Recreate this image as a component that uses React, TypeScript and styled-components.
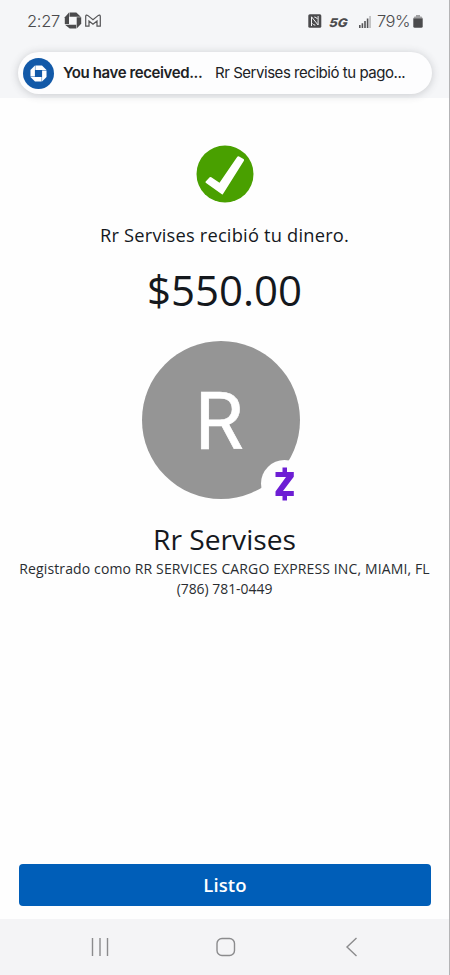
import React from "react";
import styled, { createGlobalStyle } from "styled-components";

const GlobalStyle = createGlobalStyle`
  * { box-sizing: border-box; }
  body { margin: 0; background: #fff; }
`;

const Screen = styled.div`
  width: 450px;
  height: 975px;
  display: flex;
  flex-direction: column;
  background: #fefefe;
  border-right: 1px solid #b4b4b6;
  overflow: hidden;
  color: #14181d;
  font-family: "Open Sans", "Noto Sans", sans-serif;
`;

const Header = styled.header`
  height: 98px;
  flex: none;
  background: #f5f6f8;
  padding-right: 17px;
  padding-left: 18px;
`;

const StatusBar = styled.div`
  height: 52px;
  display: flex;
  justify-content: space-between;
  align-items: flex-start;
  padding: 12px 9px 0 9px;
  color: #4b4b4d;
`;

const StatusGroup = styled.div`
  display: flex;
  align-items: center;
  height: 18px;
`;

const StatusText = styled.span<{ $spacing: number }>`
  font: 350 16.5px/18px Inter, Roboto, sans-serif;
  letter-spacing: ${(p) => p.$spacing}px;
  white-space: nowrap;
`;

const NotificationIcons = styled.svg`
  margin-left: 4px;
`;

const BatteryIcon = styled.svg`
  margin-left: 3px;
`;

const Network = styled.span`
  font: italic 800 12px/18px Inter, Roboto, sans-serif;
  transform: scaleX(1.1) skewX(-6deg);
  margin: 4px 12px 0 8px;
`;

const SignalIcon = styled.svg`
  margin: 1px 6px 0 0;
`;

const Banner = styled.div`
  height: 42px;
  border-radius: 21px;
  background: #fdfdfe;
  box-shadow: 0 1px 8px rgba(60, 64, 70, 0.24);
  display: flex;
  align-items: center;
  padding-left: 5px;
  white-space: nowrap;
`;

const AppBadge = styled.div`
  width: 31px;
  height: 31px;
  border-radius: 50%;
  background: #1259a8;
  display: grid;
  place-items: center;
  margin-right: 9px;
`;

const BannerText = styled.span<{ $weight: number; $width: number; $spacing: number }>`
  font: ${(p) => p.$weight} 15px/20px Inter, Roboto, sans-serif;
  letter-spacing: ${(p) => p.$spacing}px;
  width: ${(p) => p.$width}px;
  flex: none;
  color: #202124;
`;

const Content = styled.main`
  flex: 1;
  display: flex;
  flex-direction: column;
  align-items: center;
  padding-top: 47px;
`;

const Line = styled.div<{ $size: number; $height: number; $top?: number; $spacing?: number; $color?: string }>`
  font-size: ${(p) => p.$size}px;
  line-height: ${(p) => p.$height}px;
  margin-top: ${(p) => p.$top ?? 0}px;
  letter-spacing: ${(p) => p.$spacing ?? 0}px;
  color: ${(p) => p.$color ?? "#14181d"};
  white-space: nowrap;
`;

const Avatar = styled.div`
  position: relative;
  width: 158px;
  height: 158px;
  margin: 22px 7px 0 0;
  padding-right: 4px;
  border-radius: 50%;
  background: #959595;
  color: #fff;
  font: 400 79px/162px Roboto, sans-serif;
  -webkit-text-stroke: 0.6px #fff;
  text-align: center;
`;

const PaymentBadge = styled.div`
  position: absolute;
  left: 119px;
  top: 119px;
  width: 47px;
  height: 47px;
  border-radius: 50%;
  background: #fefefe;
  display: grid;
  place-items: center;
`;

const DoneButton = styled.button`
  height: 42px;
  margin: 0 18px 13px 19px;
  flex: none;
  border: 0;
  border-radius: 4px;
  background: #005eb8;
  color: #fff;
  font: 600 18.5px/42px "Open Sans", sans-serif;
  letter-spacing: 0.1px;
  padding: 0;
`;

const NavBar = styled.nav`
  height: 56px;
  flex: none;
  background: #f4f4f6;
  display: flex;
  justify-content: space-between;
  align-items: center;
  padding: 0 88px 0 90px;
`;

const NavIcon = styled.svg`
  width: 20px;
  height: 20px;
  fill: none;
  stroke: #8b8b8d;
  stroke-width: 1.4;
`;

const ChaseMark = () => (
  <svg width="17" height="17" viewBox="0 0 18 18" fill="#fff">
    <path d="M5.700.5h7l4.800 4.700H5.700z" />
    <path d="M17.500 5.700v7l-4.700 4.800V5.700z" />
    <path d="M12.300 17.500h-7L.5 12.800h11.800z" />
    <path d="M.5 12.300v-7L5.200.5v11.800z" />
  </svg>
);

export default function App() {
  return (
    <>
      <GlobalStyle />
      <Screen>
        <Header>
          <StatusBar>
            <StatusGroup>
              <StatusText $spacing={-0.3}>2:27</StatusText>
              <NotificationIcons width="40" height="18" viewBox="0 0 40 18">
                <g fill="#4b4b4d">
                  <path d="M5.500.5h6.800l4.500 4.200H5.500z" />
                  <path d="M17.200 5.300v6.500l-4.500 4.700V5.300z" />
                  <path d="M12.200 16.500H5.700L1 12.700h11.200z" />
                  <path d="M.8 12V5.300L5 .6V12z" />
                </g>
                <path d="M21.700 14.200V4.300q.3-1.900 2-.9l5.300 4.300 5.300-4.300q1.700-1 2 .9v9.900h-3.300V9l-4 3.300-4-3.300v5.200z" fill="none" stroke="#555557" strokeWidth="1.200" />
              </NotificationIcons>
            </StatusGroup>
            <StatusGroup>
              <svg width="14" height="14" viewBox="0 0 14 14">
                <rect x=".3" y=".3" width="13" height="13.400" rx="1.500" fill="#4b4b4d" />
                <path d="M3.500 12V2.800l6.600 8.200V2M6.300 3q2.500.2 3 2M4.500 9.500q.7 1.500 2.800 1.700" fill="none" stroke="#f5f6f8" strokeWidth="1" />
              </svg>
              <Network>5G</Network>
              <SignalIcon width="12" height="12" viewBox="0 0 12 12" fill="#555557">
                <path d="M0 9h1.600v3H0zM2.600 7.300h1.600V12H2.600zM5.200 5h1.600v7H5.200zM7.800 2.500h1.600V12H7.800z" />
                <path d="M10.300 0h1.500v12h-1.500z" opacity=".4" />
              </SignalIcon>
              <StatusText $spacing={-0.5}>79%</StatusText>
              <BatteryIcon width="10" height="13" viewBox="0 0 10 13">
                <path d="M3 0h4v1.500h1.500L9.500 3v1H.5V3l1-1.500H3z" fill="#a0a0a2" />
                <path d="M.3 3.500h9.400v7.700q0 1.500-1.500 1.500H1.800Q.3 12.700.3 11.200z" fill="#4b4b4d" />
              </BatteryIcon>
            </StatusGroup>
          </StatusBar>
          <Banner>
            <AppBadge><ChaseMark /></AppBadge>
            <BannerText $weight={600} $width={152} $spacing={-0.39}>You have received...</BannerText>
            <BannerText $weight={400} $width={200} $spacing={-0.46}>Rr Servises recibió tu pago...</BannerText>
          </Banner>
        </Header>
        <Content>
          <svg width="58" height="58" viewBox="0 0 58 58">
            <circle cx="29" cy="29" r="28.500" fill="#49a000" />
            <path d="M9.700 36.600l4-4.300q.8-.6 1.600 0l8.200 5.400L41.300 11.700q.8-.9 1.800-.3l4.400 2.600q1 .7.4 1.700L27 48.900q-.6.900-1.500.2L9.700 37.700q-.5-.5 0-1.100z" fill="#fff" />
          </svg>
          <Line $size={18.300} $height={26} $top={19} $spacing={0.2}>Rr Servises recibió tu dinero.</Line>
          <Line $size={42} $height={58} $top={13}>$550.00</Line>
          <Avatar>
            R
            <PaymentBadge>
              <svg width="22" height="34" viewBox="0 0 22 34" fill="#6d1ed4">
                <path d="M8.500.5h4.500v4.500h6.800v4.700L9 24h10.800v5H13v4.500H8.500V29H1.500v-4.500L12 10H1.500V5h7z" />
              </svg>
            </PaymentBadge>
          </Avatar>
          <Line $size={28.200} $height={38} $top={21}>Rr Servises</Line>
          <Line $size={14} $height={20} $top={1} $spacing={0.12} $color="#292d31">Registrado como RR SERVICES CARGO EXPRESS INC, MIAMI, FL</Line>
          <Line $size={13.900} $height={20} $color="#292d31">(786) 781-0449</Line>
        </Content>
        <DoneButton>Listo</DoneButton>
        <NavBar>
          <NavIcon viewBox="0 0 20 20"><path d="M2.500 1v18M10 1v18M17.500 1v18" /></NavIcon>
          <NavIcon viewBox="0 0 20 20"><rect x="1" y="1.500" width="17.500" height="17" rx="5" /></NavIcon>
          <NavIcon viewBox="0 0 20 20"><path d="M15.500 1L6 10l9.500 9" /></NavIcon>
        </NavBar>
      </Screen>
    </>
  );
}
